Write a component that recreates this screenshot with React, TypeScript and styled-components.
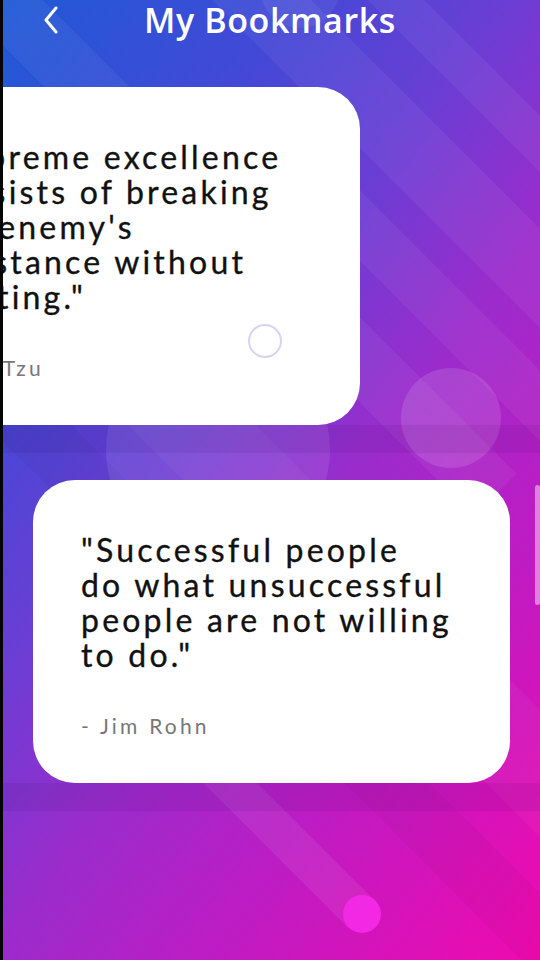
import React from "react";
import styled, { createGlobalStyle } from "styled-components";

const GlobalStyle = createGlobalStyle`
  html, body { margin: 0; padding: 0; background: #000; }
  body { overflow: hidden; }
  * { box-sizing: border-box; }
`;

const Screen = styled.div`
  position: relative;
  width: 540px;
  height: 960px;
  overflow: hidden;
  background: linear-gradient(127deg, #1e5ad6 0%, #4448d6 24%, #6a3ed4 40%, #9a2ccc 56%, #c21ac2 76%, #f00aae 100%);
  font-family: "Lato", "Open Sans", sans-serif;
`;

const Art = styled.svg`
  position: absolute;
  inset: 0;
  width: 540px;
  height: 960px;
  pointer-events: none;
`;

const Content = styled.div`
  position: relative;
  z-index: 1;
`;

const Header = styled.header`
  display: grid;
  grid-template-columns: 100px 1fr 100px;
  align-items: center;
  height: 44px;
`;

const BackButton = styled.button`
  display: flex;
  align-items: center;
  justify-content: flex-start;
  padding: 0 0 4px 42px;
  height: 44px;
  border: none;
  background: none;
  color: #fff;
  cursor: pointer;
`;

const Title = styled.h1`
  margin: 0;
  text-align: center;
  color: #fff;
  font-family: "Open Sans", "Inter", sans-serif;
  font-weight: 600;
  font-size: 34px;
  letter-spacing: 0.6px;
  line-height: 44px;
  transform: translateY(-2px);
`;

const List = styled.div`
  display: flex;
  flex-direction: column;
  gap: 27px;
  padding-top: 43px;
`;

const Item = styled.div`
  display: flex;
  flex-direction: column;
  width: 100%;
`;

const Card = styled.div<{ $offset: number }>`
  position: relative;
  width: 477px;
  margin-left: 33px;
  padding: 52px 0 45px 48px;
  background: #fff;
  border-radius: 42px;
  transform: translateX(${(p) => p.$offset}px);
`;

const Quote = styled.p`
  margin: 0;
  white-space: pre;
  color: #111;
  font-family: "Lato", sans-serif;
  font-size: 32px;
  line-height: 35px;
  letter-spacing: 3.2px;
  -webkit-text-stroke: 0.35px #111;
`;

const Author = styled.p`
  margin: 42px 0 0;
  color: #777;
  font-family: "Lato", sans-serif;
  font-size: 21px;
  line-height: 24px;
  letter-spacing: 3.2px;
`;

const SelectRing = styled.span`
  position: absolute;
  left: 365px;
  top: 237px;
  width: 34px;
  height: 34px;
  border: 2px solid #d5d5ee;
  border-radius: 50%;
`;

const Shade = styled.div`
  height: 28px;
  background: rgba(40, 0, 80, 0.08);
`;

const EdgeStrip = styled.div`
  position: absolute;
  left: 0;
  top: 0;
  width: 3px;
  height: 100%;
  background: #050505;
  z-index: 5;
`;

const ScrollThumb = styled.div`
  position: absolute;
  right: 0;
  top: 485px;
  width: 5px;
  height: 120px;
  border-radius: 3px;
  background: rgba(255, 210, 250, 0.55);
  z-index: 5;
`;

type Bookmark = { quote: string; author: string; offset: number; selectable?: boolean };

const bookmarks: Bookmark[] = [
  {
    quote: "\"Supreme excellence\nconsists of breaking\nthe enemy's\nresistance without\nfighting.\"",
    author: "- Sun Tzu",
    offset: -150,
    selectable: true,
  },
  {
    quote: "\"Successful people\ndo what unsuccessful\npeople are not willing\nto do.\"",
    author: "- Jim Rohn",
    offset: 0,
  },
];

const Chevron = () => (
  <svg width="18" height="28" viewBox="0 0 18 28" fill="none">
    <path d="M14 2 L4 14 L14 26" stroke="#fff" strokeWidth="3" strokeLinecap="round" strokeLinejoin="round" />
  </svg>
);

const Background = () => (
  <Art viewBox="0 0 540 960">
    <g transform="rotate(45)">
      <rect x="-200" y="-30" width="900" height="60" fill="#fff" opacity="0.05" />
      <rect x="-200" y="-220" width="900" height="70" fill="#fff" opacity="0.05" />
      <rect x="-200" y="-300" width="1200" height="40" fill="#fff" opacity="0.05" />
      <rect x="100" y="120" width="1000" height="90" fill="#fff" opacity="0.04" />
      <rect x="300" y="-120" width="900" height="50" fill="#fff" opacity="0.05" />
      <rect x="640" y="372" width="262" height="38" fill="#fff" opacity="0.07" />
      <rect x="200" y="250" width="1000" height="60" fill="#000" opacity="0.03" />
    </g>
    <circle cx="300" cy="-12" r="40" fill="#fff" opacity="0.06" />
    <circle cx="218" cy="450" r="112" fill="#fff" opacity="0.09" />
    <circle cx="451" cy="418" r="50" fill="#fff" opacity="0.12" />
    <circle cx="362" cy="914" r="19" fill="#f52ae8" opacity="0.9" />
  </Art>
);

export default function App() {
  return (
    <>
      <GlobalStyle />
      <Screen>
        <Background />
        <Content>
          <Header>
            <BackButton aria-label="Back">
              <Chevron />
            </BackButton>
            <Title>My Bookmarks</Title>
            <span />
          </Header>
          <List>
            {bookmarks.map((b) => (
              <Item key={b.author}>
                <Card $offset={b.offset}>
                  <Quote>{b.quote}</Quote>
                  <Author>{b.author}</Author>
                  {b.selectable && <SelectRing />}
                </Card>
                <Shade />
              </Item>
            ))}
          </List>
        </Content>
        <EdgeStrip />
        <ScrollThumb />
      </Screen>
    </>
  );
}
